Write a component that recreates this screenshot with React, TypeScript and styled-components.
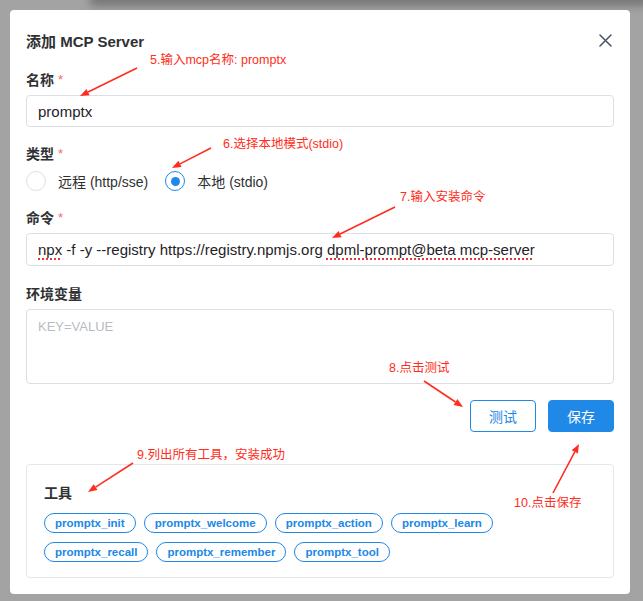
import React from 'react';
import styled, { createGlobalStyle } from 'styled-components';

const GlobalStyle = createGlobalStyle`
  html, body { margin: 0; padding: 0; }
  body {
    background: #a3a3a3;
    font-family: "Liberation Sans", "Noto Sans CJK SC", sans-serif;
    width: 643px;
    height: 601px;
    overflow: hidden;
  }
  * { box-sizing: border-box; }
`;

const BLUE = '#2088e6';
const RED = '#ff2d20';

const Page = styled.div`
  position: relative;
  width: 643px;
  height: 601px;
  padding: 10px 13px 8px 10px;
  overflow: hidden;
`;

const BackdropBlur = styled.div`
  position: absolute;
  left: 90px;
  right: -20px;
  top: -10px;
  height: 16px;
  background: #777;
  filter: blur(4px);
`;

const Dialog = styled.div`
  position: relative;
  width: 620px;
  background: #fff;
  border-radius: 4px;
  padding: 20px 16px 16px;
  display: flex;
  flex-direction: column;
`;

const Header = styled.div`
  display: flex;
  align-items: center;
  justify-content: space-between;
  height: 20px;
`;

const Title = styled.h2`
  margin: 0;
  height: 20px;
  display: flex;
  align-items: center;
  font-size: 15px;
  font-weight: 700;
  color: #303133;
`;

const CloseButton = styled.button`
  width: 18px;
  height: 18px;
  padding: 0;
  border: 0;
  background: transparent;
  display: flex;
  align-items: center;
  justify-content: center;
  color: #4a5260;
`;

const Field = styled.div<{ $mt: number }>`
  display: flex;
  flex-direction: column;
  gap: 6px;
  margin-top: ${(p) => p.$mt}px;
`;

const Label = styled.label`
  height: 20px;
  display: flex;
  align-items: center;
  font-size: 14px;
  font-weight: 600;
  color: #303133;
`;

const Star = styled.span`
  color: #f56c6c;
  margin-left: 4px;
  font-weight: 400;
  font-size: 13px;
  line-height: 1;
`;

const TextBox = styled.div<{ $h: number }>`
  height: ${(p) => p.$h}px;
  border: 1px solid #dcdfe6;
  border-radius: 4px;
  padding: 0 11px;
  display: flex;
  align-items: center;
  font-size: 15px;
  color: #1f2329;
  white-space: nowrap;
`;

const Misspelled = styled.span`
  text-decoration: underline dotted #e53935;
  text-decoration-thickness: 1.5px;
  text-underline-offset: 3px;
`;

const TextArea = styled.textarea`
  height: 75px;
  border: 1px solid #dcdfe6;
  border-radius: 4px;
  padding: 7px 11px;
  resize: none;
  font-family: "Liberation Sans", "Noto Sans CJK SC", sans-serif;
  font-size: 13px;
  line-height: 20px;
  outline: none;
  &::placeholder { color: #b8bcc4; }
`;

const RadioGroup = styled.div`
  display: flex;
  align-items: center;
  height: 24px;
`;

const RadioOption = styled.div`
  display: flex;
  align-items: center;
  gap: 12px;
  margin-right: 17px;
  font-size: 14px;
  color: #303133;
`;

const RadioCircle = styled.span<{ $checked?: boolean }>`
  position: relative;
  width: 20px;
  height: 20px;
  border-radius: 50%;
  border: 1px solid ${(p) => (p.$checked ? BLUE : '#dcdfe6')};
  background: #fff;
  &::after {
    content: '';
    display: ${(p) => (p.$checked ? 'block' : 'none')};
    position: absolute;
    left: 50%;
    top: 50%;
    width: 9px;
    height: 9px;
    margin: -4.5px 0 0 -4.5px;
    border-radius: 50%;
    background: ${BLUE};
  }
`;

const Actions = styled.div`
  display: flex;
  justify-content: flex-end;
  gap: 12px;
  margin-top: 16px;
`;

const Button = styled.button<{ $primary?: boolean }>`
  width: 66px;
  height: 32px;
  border-radius: 4px;
  border: 1px solid ${BLUE};
  background: ${(p) => (p.$primary ? BLUE : '#fff')};
  color: ${(p) => (p.$primary ? '#fff' : BLUE)};
  font-family: "Liberation Sans", "Noto Sans CJK SC", sans-serif;
  font-size: 14px;
  padding: 0;
`;

const ToolsCard = styled.div`
  margin-top: 32px;
  border: 1px solid #e4e7ed;
  border-radius: 4px;
  padding: 17px 17px 15px;
`;

const CardTitle = styled.div`
  height: 20px;
  display: flex;
  align-items: center;
  font-size: 14px;
  font-weight: 700;
  color: #303133;
  margin-bottom: 11px;
`;

const TagList = styled.div`
  display: flex;
  flex-wrap: wrap;
  gap: 9px 8px;
  width: 470px;
`;

const Tag = styled.span`
  border: 1px solid ${BLUE};
  border-radius: 10px;
  color: ${BLUE};
  font-size: 11.5px;
  font-weight: 700;
  line-height: 18px;
  padding: 0 10px;
`;

const Note = styled.div<{ $x: number; $y: number }>`
  position: absolute;
  left: ${(p) => p.$x}px;
  top: ${(p) => p.$y - 8}px;
  font-size: 12.5px;
  line-height: 16px;
  color: ${RED};
  white-space: nowrap;
`;

const ArrowLayer = styled.svg`
  position: absolute;
  left: 0;
  top: 0;
  pointer-events: none;
`;

const notes = [
  { x: 150, y: 60, t: '5.输入mcp名称: promptx' },
  { x: 223, y: 144, t: '6.选择本地模式(stdio)' },
  { x: 400, y: 197, t: '7.输入安装命令' },
  { x: 389, y: 368, t: '8.点击测试' },
  { x: 137, y: 455, t: '9.列出所有工具，安装成功' },
  { x: 514, y: 503, t: '10.点击保存' },
];

const arrows: [number, number, number, number][] = [
  [137, 68, 80, 96],
  [211, 148, 172, 168],
  [395, 207, 332, 238],
  [424, 381, 463, 407],
  [133, 463, 88, 492],
  [553, 493, 579, 444],
];

const tools = [
  'promptx_init',
  'promptx_welcome',
  'promptx_action',
  'promptx_learn',
  'promptx_recall',
  'promptx_remember',
  'promptx_tool',
];

function Arrow({ a }: { a: [number, number, number, number] }) {
  const [x1, y1, x2, y2] = a;
  const dx = x2 - x1;
  const dy = y2 - y1;
  const len = Math.hypot(dx, dy);
  const ux = dx / len;
  const uy = dy / len;
  const hl = 9;
  const hw = 3.5;
  const bx = x2 - ux * hl;
  const by = y2 - uy * hl;
  const p1 = `${x2},${y2}`;
  const p2 = `${bx - uy * hw},${by + ux * hw}`;
  const p3 = `${bx + uy * hw},${by - ux * hw}`;
  return (
    <g>
      <line x1={x1} y1={y1} x2={bx} y2={by} stroke={RED} strokeWidth={1.6} />
      <polygon points={`${p1} ${p2} ${p3}`} fill={RED} />
    </g>
  );
}

export default function App() {
  return (
    <>
      <GlobalStyle />
      <Page>
        <BackdropBlur />
        <Dialog>
          <Header>
            <Title>添加 MCP Server</Title>
            <CloseButton aria-label="close">
              <svg width="13" height="13" viewBox="0 0 13 13">
                <path d="M1 1L12 12M12 1L1 12" stroke="currentColor" strokeWidth="1.5" strokeLinecap="round" />
              </svg>
            </CloseButton>
          </Header>

          <Field $mt={19}>
            <Label>
              名称<Star>*</Star>
            </Label>
            <TextBox $h={32}>promptx</TextBox>
          </Field>

          <Field $mt={16}>
            <Label>
              类型<Star>*</Star>
            </Label>
            <RadioGroup>
              <RadioOption>
                <RadioCircle />
                远程 (http/sse)
              </RadioOption>
              <RadioOption>
                <RadioCircle $checked />
                本地 (stdio)
              </RadioOption>
            </RadioGroup>
          </Field>

          <Field $mt={14}>
            <Label>
              命令<Star>*</Star>
            </Label>
            <TextBox $h={33}>
              <Misspelled>npx</Misspelled>&nbsp;-f -y --registry https://registry.npmjs.org&nbsp;
              <Misspelled>dpml-prompt@beta mcp-server</Misspelled>
            </TextBox>
          </Field>

          <Field $mt={17}>
            <Label>环境变量</Label>
            <TextArea placeholder="KEY=VALUE" />
          </Field>

          <Actions>
            <Button>测试</Button>
            <Button $primary>保存</Button>
          </Actions>

          <ToolsCard>
            <CardTitle>工具</CardTitle>
            <TagList>
              {tools.map((t) => (
                <Tag key={t}>{t}</Tag>
              ))}
            </TagList>
          </ToolsCard>
        </Dialog>

        {notes.map((n) => (
          <Note key={n.t} $x={n.x} $y={n.y}>
            {n.t}
          </Note>
        ))}
        <ArrowLayer width={643} height={601}>
          {arrows.map((a, i) => (
            <Arrow key={i} a={a} />
          ))}
        </ArrowLayer>
      </Page>
    </>
  );
}
